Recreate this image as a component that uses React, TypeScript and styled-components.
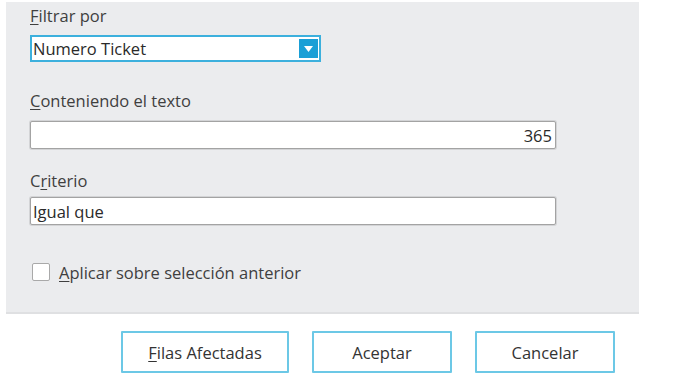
import styled, { createGlobalStyle } from 'styled-components';

const GlobalStyle = createGlobalStyle`
  body {
    margin: 0;
    background: #ffffff;
    font-family: 'Open Sans', 'Noto Sans', sans-serif;
    color: #3a3a3a;
  }
`;

const Dialog = styled.div`
  width: 690px;
  height: 390px;
  display: flex;
  flex-direction: column;
`;

const Panel = styled.section`
  margin: 2px 0 0 6px;
  width: 633px;
  height: 312px;
  padding: 3px 0 0 24px;
  box-sizing: border-box;
  background: #ebecee;
  border-bottom: 2px solid #dfe0e2;
  display: flex;
  flex-direction: column;
`;

const Label = styled.label<{ $gap: number }>`
  font-size: 16.5px;
  line-height: 22px;
  color: #3f3f3f;
  margin-top: ${(p) => p.$gap}px;
`;

const Key = styled.span`
  text-decoration: underline;
  text-underline-offset: 2px;
`;

const Select = styled.div<{ $gap: number }>`
  margin-top: ${(p) => p.$gap}px;
  width: 291px;
  height: 27px;
  box-sizing: border-box;
  border: 2px solid #3cb0dd;
  background: #fff;
  display: flex;
  align-items: center;
  justify-content: space-between;
  padding: 0 1px 0 1px;
  font-size: 16.5px;
  color: #2a2a2a;
`;

const DropButton = styled.span`
  width: 19px;
  height: 19px;
  background: #1a9fd6;
  display: flex;
  align-items: center;
  justify-content: center;
`;

const Field = styled.div<{ $gap: number; $right?: boolean }>`
  margin-top: ${(p) => p.$gap}px;
  width: 526px;
  height: 28px;
  box-sizing: border-box;
  border: 1px solid #a3a3a3;
  border-radius: 2px;
  box-shadow: 0 0 0 1px #d3d4d6;
  background: #fff;
  display: flex;
  align-items: center;
  justify-content: ${(p) => (p.$right ? 'flex-end' : 'flex-start')};
  padding: 0 3px 0 2px;
  font-size: 16.5px;
  color: #2a2a2a;
`;

const CheckRow = styled.div`
  margin-top: 36px;
  display: flex;
  align-items: center;
  gap: 9px;
  height: 22px;
  padding-left: 2px;
  font-size: 16.5px;
  color: #3f3f3f;
`;

const Box = styled.span`
  width: 18px;
  height: 18px;
  box-sizing: border-box;
  border: 1px solid #a9a9a9;
  border-radius: 2px;
  background: #fff;
`;

const Actions = styled.div`
  margin: 17px 0 0 121px;
  display: flex;
  gap: 23px;
`;

const Button = styled.button<{ $w: number }>`
  width: ${(p) => p.$w}px;
  height: 42px;
  box-sizing: border-box;
  border: 2px solid #6cc8e6;
  border-radius: 1px;
  background: #fff;
  font-family: 'Open Sans', 'Noto Sans', sans-serif;
  font-size: 16.5px;
  color: #333;
  padding: 0;
`;

export default function App() {
  return (
    <Dialog>
      <GlobalStyle />
      <Panel>
        <Label $gap={0}>
          <Key>F</Key>iltrar por
        </Label>
        <Select $gap={8}>
          <span>Numero Ticket</span>
          <DropButton>
            <svg width="9" height="6" viewBox="0 0 9 6">
              <path d="M0 0 H9 L4.5 6 Z" fill="#fff" />
            </svg>
          </DropButton>
        </Select>
        <Label $gap={28}>
          <Key>C</Key>onteniendo el texto
        </Label>
        <Field $gap={9} $right>
          365
        </Field>
        <Label $gap={21}>
          C<Key>r</Key>iterio
        </Label>
        <Field $gap={5}>Igual que</Field>
        <CheckRow>
          <Box />
          <span>
            <Key>A</Key>plicar sobre selección anterior
          </span>
        </CheckRow>
      </Panel>
      <Actions>
        <Button $w={168}>
          <Key>F</Key>ilas Afectadas
        </Button>
        <Button $w={140}>Aceptar</Button>
        <Button $w={140}>Cancelar</Button>
      </Actions>
    </Dialog>
  );
}
